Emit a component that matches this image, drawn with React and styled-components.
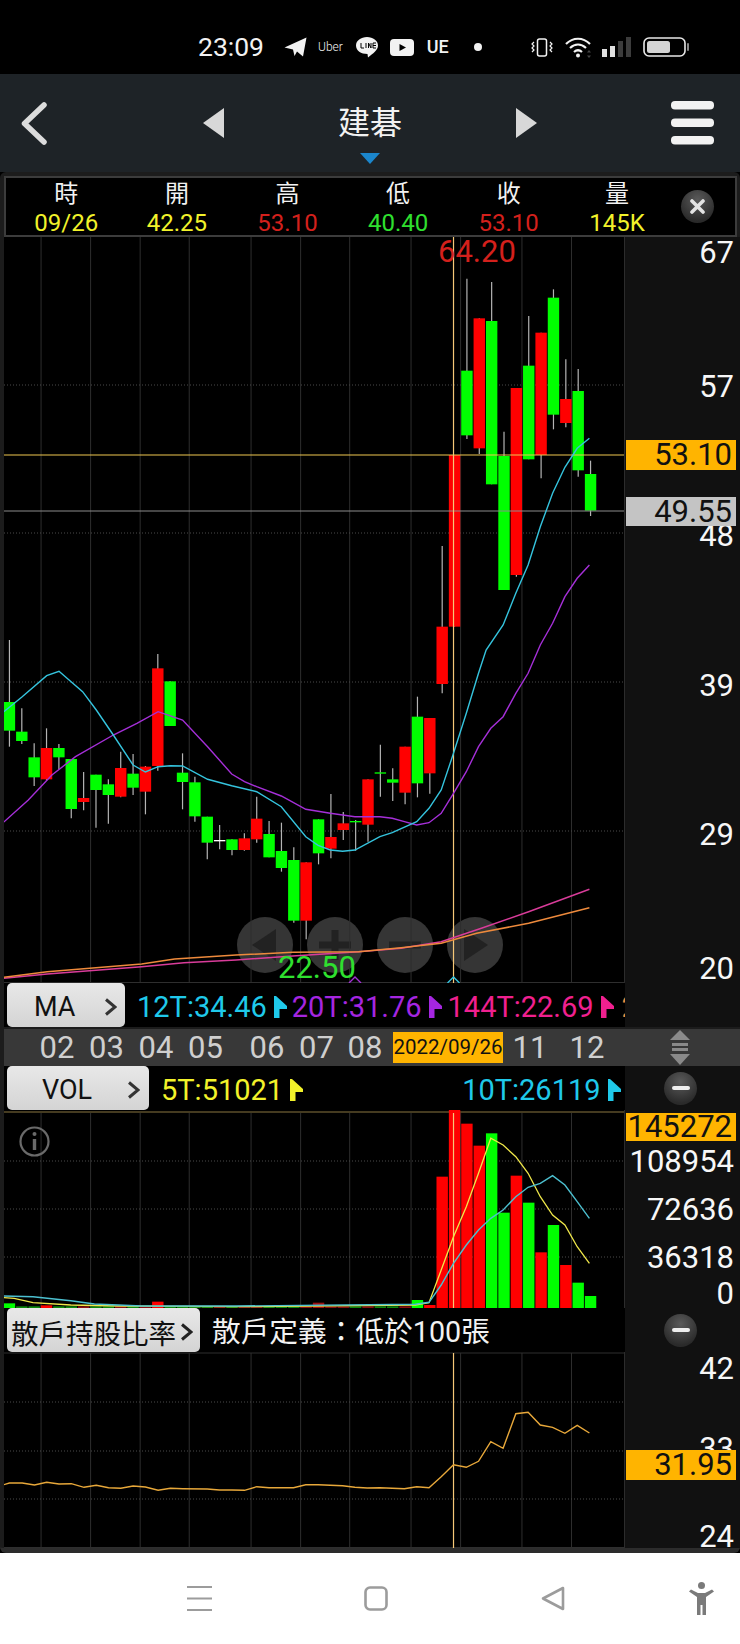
import React from "react";
import styled, { createGlobalStyle } from "styled-components";

const Global = createGlobalStyle`
  html, body { margin: 0; padding: 0; background: #000; }
  #root { width: 740px; height: 1644px; }
  * { box-sizing: border-box; }
`;

const FONT = `Roboto, "Noto Sans CJK TC", sans-serif`;
const AMBER = "#ffb400";
const YELLOW = "#f2f22a";
const RED = "#d4201c";
const GREEN = "#2fe02f";
const CYAN = "#1fc9ea";
const PURPLE = "#a526e0";
const PINK = "#f0208f";
const CAND_G = "#00ff00";
const CAND_R = "#ff0000";
const CURSOR = "#f6c878";

const Page = styled.div`
  width: 740px; height: 1644px; overflow: hidden; display: flex; flex-direction: column;
  background: #000; font-family: ${FONT};
`;

/* status bar */
const StatusBar = styled.div`
  height: 74px; flex: none; display: flex; align-items: center; padding: 20px 0 0 198px; background: #000; color: #f2f2f2;
`;
const Clock = styled.span`font-size: 26.5px; font-weight: 400; line-height: 1; width: 64px; white-space: nowrap;`;
const StatusItem = styled.span`
  display: flex; align-items: center; margin-left: ${p => p.$ml}px; flex: none; line-height: 1;
  font-size: ${p => p.$size || 12}px; font-weight: ${p => p.$weight || 400};
`;

/* header */
const Header = styled.div`
  height: 98px; flex: none; background: #1e2327; display: flex; align-items: center; padding-left: 21px;
`;
const StockNav = styled.div`display: flex; align-items: center; gap: 114px; margin-left: 156px; margin-right: 134px;`;
const TitleBox = styled.div`position: relative; width: 64px; text-align: center;`;
const Title = styled.div`font-size: 32px; line-height: 40px; color: #f2f2f2;`;
const Caret = styled.span`
  position: absolute; left: 22px; top: 50px; width: 0; height: 0;
  border-left: 10px solid transparent; border-right: 10px solid transparent; border-top: 11px solid #1b86cc;
`;

/* panel */
const Panel = styled.div`
  height: 1381px; flex: none; padding-left: 4px; background: #1c1c1c; display: flex; flex-direction: column;
  border-radius: 6px; border-bottom: 5px solid #2c2c2c;
`;
const InfoBar = styled.div`
  margin: 4px 3px 0 0; height: 61px; flex: none; background: #000; border: 2px solid #3c3c3c; display: flex; align-items: center;
  padding-left: 5px; color: #fff;
`;
const InfoGrid = styled.div`display: grid; grid-template-columns: repeat(5, 110.6px) 106px;`;
const InfoCell = styled.div`display: flex; flex-direction: column; align-items: center;`;
const InfoLabel = styled.span`font-size: 24px; line-height: 33px; color: #f2f2f2;`;
const InfoValue = styled.span`font-size: 24px; line-height: 25px; color: ${p => p.$color};`;

const RoundBtn = styled.span`
  width: 33px; height: 33px; border-radius: 50%; flex: none; display: flex; align-items: center; justify-content: center;
  background: radial-gradient(circle at 50% 30%, #5a5a5a, #2a2a2a 75%);
  margin-left: ${p => p.$ml || 0}px;
`;
const Dash = styled.span`width: 18px; height: 4px; border-radius: 2px; background: #eee;`;

const ChartRow = styled.div`display: flex; height: ${p => p.$h}px; flex: none;`;
const Plot = styled.div`
  position: relative; width: 621px; flex: none; background: #000; overflow: hidden;
  border-right: 1px solid #2c2c2c;
`;
const PlotSvg = styled.svg`position: absolute; left: 0; top: 0; width: 621px; height: 100%; z-index: 2;`;
const Axis = styled.div`position: relative; flex: 1; background: #111;`;
const Tick = styled.span`
  position: absolute; right: 6px; top: ${p => p.$y}px; transform: translateY(-50%); font-size: 31px; line-height: 1; color: #f7f7f7;
`;
const Tag = styled.span`
  position: absolute; left: 1px; top: ${p => p.$y}px; width: 110px; height: ${p => p.$h}px; background: ${p => p.$bg};
  font-size: 31px; line-height: ${p => p.$h}px; color: #111; text-align: right; padding-right: 4px;
`;
const ValueMark = styled.span`
  position: absolute; left: ${p => p.$x}px; top: ${p => p.$y}px; font-size: 31px; line-height: 28px; color: ${p => p.$color}; z-index: 3;
`;
const ZoomTray = styled.div`position: absolute; left: 233px; bottom: 10px; display: flex; gap: 14px; z-index: 1;`;
const ZoomBtn = styled.span`
  width: 56px; height: 56px; border-radius: 50%; background: #353535; display: flex; align-items: center; justify-content: center;
`;
const InfoMark = styled.span`
  position: absolute; left: 15px; top: 16px; width: 31px; height: 31px; z-index: 3;
`;

/* indicator rows */
const ToolRow = styled.div`display: flex; height: 44px; flex: none;`;
const ToolMain = styled.div`
  width: 621px; flex: none; background: #000; display: flex; align-items: center; padding-left: 3px; overflow: hidden; white-space: nowrap;
`;
const ToolSide = styled.div`flex: 1; background: #111; display: flex; align-items: center; padding-left: 39px;`;
const SelectBtn = styled.div`
  width: ${p => p.$w}px; height: 44px; flex: none; border-radius: 5px; display: flex; align-items: center; justify-content: space-between;
  padding: 4px ${p => p.$pr}px 0 ${p => p.$pl}px; color: #111; font-size: ${p => p.$size}px;
  background: linear-gradient(#e8e8e8, #d4d4d4);
`;
const Legend = styled.div`
  display: flex; align-items: center; margin-left: ${p => p.$ml}px; gap: 7px; flex: none; font-size: 29px; line-height: 1; padding-top: 4px; color: ${p => p.$color};
`;
const Note = styled.span`margin-left: 12px; padding-top: 4px; font-size: 28.7px; line-height: 1; color: #f2f2f2;`;

const DateRow = styled.div`
  height: 37px; flex: none; margin-top: 2px; background: #383838; display: flex; align-items: center; padding-left: 28px;
`;
const DateTick = styled.span`
  width: ${p => p.$w}px; margin-left: ${p => p.$ml || 0}px; text-align: center; font-size: 31px; line-height: 1; color: #cfcfcf; flex: none;
`;
const DateTag = styled.span`
  width: 110px; height: 31px; margin-left: 4px; flex: none; background: ${AMBER}; color: #111; font-size: 20.5px; line-height: 31px; text-align: center;
`;
const Scrub = styled.span`margin-left: 56px; display: flex;`;

/* nav */
const NavBar = styled.div`
  flex: 1; background: #fff; display: flex; align-items: center; padding-left: 187px;
`;
const NavItem = styled.span`display: flex; margin-left: ${p => p.$ml || 0}px;`;

/* icons */
const Chevron = ({ c = "#333" }) => (
  <svg width="13" height="18" viewBox="0 0 13 18"><path d="M2 1.5 L11 9 L2 16.5" fill="none" stroke={c} strokeWidth="3" /></svg>
);
const Flag = ({ c }) => (
  <svg width="13" height="22" viewBox="0 0 13 22"><path d="M0 0 L2 0 L13 10 L13 13 L5.5 13 L5.5 22 L0 22 Z" fill={c} /></svg>
);

const X = x => x / 2.119;
const pts = (arr, base) => arr.map(([x, y]) => `${X(x).toFixed(1)},${(base + y / 3).toFixed(1)}`).join(" ");

const V_GRID = [87, 192, 297, 401, 532, 637, 741, 871, 976, 1106, 1211].map(X);
const CURSOR_X = X(961);

const Grid = ({ y0, y1, hs }) => (
  <g>
    {V_GRID.map(x => <line key={x} x1={x} x2={x} y1={y0} y2={y1} stroke="#2e2e2e" strokeWidth="1" />)}
    {hs.map(y => <line key={y} x1="4" x2="625" y1={y} y2={y} stroke="#4a4a4a" strokeWidth="1" strokeDasharray="1 2" />)}
  </g>
);

/* [type, bodyTop, bodyBottom, wickTop, wickBottom], in crop units: y = 640 + v / 3 */
const s = -1230;
const CANDLES = [
  ["g",186,272,0,320],["g",275,303,205,312],["g",352,412,310,438],["r",324,418,265,422],["g",324,352,312,388],
  ["g",357,507,357,535],["r",474,486,396,511],["g",404,450,404,563],["g",433,465,418,551],["r",384,470,335,472],
  ["g",401,443,342,465],["r",380,455,378,523],["r",85,378,42,392],["g",124,258,124,258],["g",398,426,340,508],
  ["g",427,529,410,545],["g",530,608,530,658],["w",600,604,555,628],["g",598,630,598,646],["r",595,630,580,632],
  ["r",536,598,470,608],["g",582,652,543,652],["g",633,684,548,695],["g",660,842,622,848],["r",667,842,667,898],
  ["g",538,640,538,673],["r",591,626,462,655],["r",550,570,516,600],["g",543,547,540,632],["r",418,554,418,605],
  ["g",397,401,314,470],["g",418,428,385,483],["r",320,458,320,493],["g",230,430,170,472],["r",234,400,234,461],
  ["r",1190+s,132,948+s,160],["r",675+s,1190+s,675+s,1190+s],["g",422+s,616+s,146+s,627+s],["r",265+s,655+s,265+s,672+s],
  ["g",273+s,763+s,156+s,763+s],["g",678+s,1080+s,605+s,1080+s],["r",474+s,1035+s,474+s,1040+s],["g",407+s,688+s,258+s,688+s],
  ["r",308+s,675+s,308+s,745+s],["g",203+s,554+s,178+s,598+s],["r",507+s,579+s,388+s,592+s],["g",483+s,721+s,417+s,740+s],
  ["g",732+s,842+s,692+s,858+s],
];
const cx = i => X(20 + 26.2 * i);
const fillOf = t => (t === "g" ? CAND_G : t === "r" ? CAND_R : "#fff");

const MA12 = [[8,215],[47,170],[99,107],[125,94],[175,155],[204,210],[240,285],[282,375],[308,396],[335,380],[361,377],[387,378],[440,418],[491,437],[544,455],[596,500],[648,590],[674,616],[700,630],[726,634],[752,630],[805,590],[831,578],[883,545],[909,505],[935,450],[961,340],[988,220],[1014,100],[1030,30],[1066,-45],[1093,-140],[1119,-225],[1145,-340],[1171,-440],[1197,-518],[1223,-575],[1249,-605]];
const MA20 = [[8,546],[60,480],[110,405],[160,350],[240,285],[290,250],[335,215],[387,240],[440,320],[491,402],[518,425],[544,440],[596,468],[648,508],[700,520],[752,530],[805,530],[831,535],[857,545],[883,555],[909,548],[935,520],[961,460],[988,395],[1014,320],[1040,265],[1066,230],[1093,160],[1119,100],[1145,15],[1171,-50],[1197,-130],[1223,-185],[1249,-225]];
const MA144 = [[8,1015],[100,1002],[300,980],[390,968],[500,960],[620,948],[760,935],[850,925],[935,905],[1020,865],[1120,815],[1249,748]];
const MA240 = [[8,1012],[100,995],[300,972],[370,957],[500,945],[620,937],[760,935],[850,923],[935,910],[1010,880],[1120,850],[1249,803]];

const VOL_TOP = { 0: 1000, 3: 1006, 12: 995, 25: 998, 33: 990, 34: 1005, 35: 620, 36: 420, 37: 461, 38: 527, 39: 490, 40: 728, 41: 617, 42: 698, 43: 847, 44: 765, 45: 885, 46: 938, 47: 978 };
const VOL5 = [[8,983],[30,985],[70,998],[150,1005],[250,1008],[500,1010],[880,1005],[909,998],[935,900],[961,800],[988,710],[1014,610],[1040,505],[1066,525],[1093,560],[1119,610],[1145,680],[1171,735],[1197,765],[1223,830],[1249,880]];
const VOL10 = [[8,978],[70,980],[150,992],[200,1002],[300,1008],[500,1008],[880,1003],[909,997],[935,945],[961,880],[988,825],[1014,780],[1040,745],[1066,720],[1093,680],[1119,652],[1145,640],[1171,617],[1197,645],[1223,695],[1249,745]];
const RATIO = [[8,554],[20,549],[47,549],[73,555],[99,547],[125,552],[151,551],[178,562],[204,556],[230,563],[256,565],[282,558],[308,561],[335,571],[361,565],[387,566],[439,567],[465,570],[491,570],[518,571],[544,560],[570,563],[622,563],[648,554],[674,554],[726,557],[752,562],[778,564],[805,563],[831,565],[857,566],[883,560],[909,563],[935,530],[961,494],[988,502],[1014,484],[1040,425],[1066,445],[1093,341],[1119,337],[1145,375],[1171,382],[1197,400],[1223,376],[1249,399]];

const PriceChart = () => (
  <PlotSvg viewBox="4 237 621 746" preserveAspectRatio="none">
    <Grid y0={237} y1={983} hs={[385, 533, 682, 831]} />
    <line x1="4" x2="625" y1="982.5" y2="982.5" stroke="#2e2e2e" strokeWidth="1" />
    {CANDLES.map(([t, a, b, wa, wb], i) => (
      <line key={"w" + i} x1={cx(i)} x2={cx(i)} y1={640 + wa / 3} y2={640 + wb / 3} stroke="#b4b4b4" strokeWidth="1.2" />
    ))}
    {CANDLES.map(([t, a, b], i) => (
      <rect key={"b" + i} x={cx(i) - 5.7} width="11.4" y={640 + a / 3} height={(b - a) / 3} fill={fillOf(t)} />
    ))}
    <line x1="4" x2="625" y1="455" y2="455" stroke="#f0c850" strokeWidth="1.2" />
    <line x1="4" x2="625" y1="511" y2="511" stroke="#8c8c8c" strokeWidth="1.2" />
    <line x1={CURSOR_X} x2={CURSOR_X} y1="237" y2="983" stroke={CURSOR} strokeWidth="1.2" />
    <polyline points={pts(MA20, 640)} fill="none" stroke="#a52fd8" strokeWidth="1.4" />
    <polyline points={pts(MA12, 640)} fill="none" stroke="#35c4de" strokeWidth="1.4" />
    <polyline points={pts(MA144, 640)} fill="none" stroke="#d93c9a" strokeWidth="1.5" />
    <polyline points={pts(MA240, 640)} fill="none" stroke="#ee8a3c" strokeWidth="1.5" />
    <path d="M349 983 L355 977 L361 983" fill="none" stroke="#a52fd8" strokeWidth="1.4" />
    <path d={`M${CURSOR_X - 6} 983 L${CURSOR_X} 977 L${CURSOR_X + 6} 983`} fill="none" stroke="#35c4de" strokeWidth="1.4" />
  </PlotSvg>
);

const VOL_RED = new Set([35, 36, 37, 38, 41, 43, 45]);

const VolChart = () => (
  <PlotSvg viewBox="4 1110 621 198" preserveAspectRatio="none">
    <Grid y0={1113} y1={1308} hs={[1161, 1209, 1257]} />
    <line x1="4" x2="625" y1="1112" y2="1112" stroke="#8a7640" strokeWidth="1.2" />
    {CANDLES.map(([t], i) => {
      const top = VOL_TOP[i] ?? 1009;
      const big = i > 34;
      const color = big
        ? (VOL_RED.has(i) ? CAND_R : CAND_G)
        : i === 33 ? CAND_G
        : i === 25 ? "#a01010"
        : VOL_TOP[i] == null ? (t === "g" ? "#0c8a0c" : "#8a1010") : fillOf(t === "w" ? "g" : t);
      return <rect key={i} x={cx(i) - 5.7} width="11.4" y={970 + top / 3} height={(1014 - top) / 3} fill={color} />;
    })}
    <line x1={CURSOR_X} x2={CURSOR_X} y1="1113" y2="1308" stroke={CURSOR} strokeWidth="1.2" />
    <polyline points={pts(VOL5, 970)} fill="none" stroke="#f0e84a" strokeWidth="1.3" />
    <polyline points={pts(VOL10, 970)} fill="none" stroke="#4cc0d0" strokeWidth="1.4" />
  </PlotSvg>
);

const RatioChart = () => (
  <PlotSvg viewBox="4 1352 621 196" preserveAspectRatio="none">
    <Grid y0={1353} y1={1548} hs={[1402, 1451, 1499]} />
    <line x1="4" x2="625" y1="1353" y2="1353" stroke="#2e2e2e" strokeWidth="1" />
    <line x1="4" x2="625" y1="1547.5" y2="1547.5" stroke="#2e2e2e" strokeWidth="1" />
    <line x1={CURSOR_X} x2={CURSOR_X} y1="1353" y2="1548" stroke={CURSOR} strokeWidth="1.2" />
    <polyline points={pts(RATIO, 1300)} fill="none" stroke="#e8a83a" strokeWidth="1.4" />
  </PlotSvg>
);

const INFO = [
  ["時", "09/26", YELLOW], ["開", "42.25", YELLOW], ["高", "53.10", RED],
  ["低", "40.40", GREEN], ["收", "53.10", RED], ["量", "145K", YELLOW],
];

export default function App() {
  return (
    <Page>
      <Global />
      <StatusBar>
        <Clock>23:09</Clock>
        <StatusItem $ml={22}>
          <svg width="23" height="20" viewBox="0 0 23 20"><path d="M0.5 10.5 L22.5 0.5 L19 19.5 L13 14.5 L10.5 19 L9 12.5 Z" fill="#f2f2f2" /></svg>
        </StatusItem>
        <StatusItem $ml={11} $size={12} $weight={300}>Uber</StatusItem>
        <StatusItem $ml={13}>
          <svg width="22" height="21" viewBox="0 0 22 21">
            <path d="M11 0 C17 0 22 3.6 22 8.5 C22 13 17 16.5 12 20.5 L11.5 17 C5 17 0 13.5 0 8.5 C0 3.6 5 0 11 0 Z" fill="#f2f2f2" />
            <path d="M5 6 V11 H8 M10 6 V11 M12.5 11 V6 L15 11 V6 M20 6 H17 V11 H20 M17 8.5 H20" fill="none" stroke="#000" strokeWidth="1" />
          </svg>
        </StatusItem>
        <StatusItem $ml={12}>
          <svg width="24" height="17" viewBox="0 0 24 17"><rect width="24" height="17" rx="4" fill="#f2f2f2" /><path d="M9.5 5 L16 8.5 L9.5 12 Z" fill="#000" /></svg>
        </StatusItem>
        <StatusItem $ml={13} $size={18} $weight={500}>UE</StatusItem>
        <StatusItem $ml={25}>
          <svg width="8" height="8" viewBox="0 0 8 8"><circle cx="4" cy="4" r="4" fill="#f2f2f2" /></svg>
        </StatusItem>
        <StatusItem $ml={49}>
          <svg width="22" height="19" viewBox="0 0 22 19" fill="none" stroke="#f2f2f2" strokeWidth="1.5">
            <rect x="6.5" y="1" width="9" height="17" rx="2" />
            <path d="M3 4 L1 6 L3 8 L1 10 L3 12 L1 14 M19 4 L21 6 L19 8 L21 10 L19 12 L21 14" strokeWidth="1.2" />
          </svg>
        </StatusItem>
        <StatusItem $ml={12}>
          <svg width="29" height="21" viewBox="0 0 29 21" fill="none" stroke="#f2f2f2" strokeWidth="2.2">
            <path d="M1 7 C8 0 18 0 25 7 M5 11 C10 6.5 16 6.5 21 11 M9 15 C11.5 12.8 14.5 12.8 17 15" />
            <circle cx="13" cy="18.5" r="2" fill="#f2f2f2" stroke="none" />
            <path d="M24 13 L26 15.5 H22 Z M24 21 L26 18.5 H22 Z" fill="#444" stroke="none" />
          </svg>
        </StatusItem>
        <StatusItem $ml={8}>
          <svg width="29" height="20" viewBox="0 0 29 20">
            <rect x="0" y="12" width="5" height="8" fill="#e0e0e0" />
            <rect x="8" y="9" width="5" height="11" fill="#e0e0e0" />
            <rect x="16" y="4" width="5" height="16" fill="#3c3c3c" />
            <rect x="24" y="0" width="5" height="20" fill="#3c3c3c" />
          </svg>
        </StatusItem>
        <StatusItem $ml={12}>
          <svg width="46" height="20" viewBox="0 0 46 20">
            <rect x="1" y="1" width="41" height="18" rx="5" fill="none" stroke="#e8e8e8" strokeWidth="1.6" />
            <rect x="4" y="4" width="23" height="12" rx="2.5" fill="#d4d4d4" />
            <rect x="44" y="6" width="2" height="8" rx="1" fill="#888" />
          </svg>
        </StatusItem>
      </StatusBar>

      <Header>
        <svg width="26" height="43" viewBox="0 0 26 43"><path d="M23 3 L3.5 21.5 L23 40" fill="none" stroke="#dcdcdc" strokeWidth="5.5" strokeLinecap="round" strokeLinejoin="round" /></svg>
        <StockNav>
          <svg width="21" height="30" viewBox="0 0 21 30"><path d="M21 0 V30 L0 15 Z" fill="#d8d8d8" /></svg>
          <TitleBox>
            <Title>建碁</Title>
            <Caret />
          </TitleBox>
          <svg width="21" height="30" viewBox="0 0 21 30"><path d="M0 0 V30 L21 15 Z" fill="#d8d8d8" /></svg>
        </StockNav>
        <svg width="43" height="44" viewBox="0 0 43 44">
          <rect y="0" width="43" height="8.5" rx="4" fill="#f2f2f2" />
          <rect y="17.5" width="43" height="8.5" rx="4" fill="#f2f2f2" />
          <rect y="35" width="43" height="8.5" rx="4" fill="#f2f2f2" />
        </svg>
      </Header>

      <Panel>
        <InfoBar>
          <InfoGrid>
            {INFO.map(([l, v, c]) => (
              <InfoCell key={l}>
                <InfoLabel>{l}</InfoLabel>
                <InfoValue $color={c}>{v}</InfoValue>
              </InfoCell>
            ))}
          </InfoGrid>
          <RoundBtn $ml={11}>
            <svg width="15" height="15" viewBox="0 0 15 15"><path d="M2 2 L13 13 M13 2 L2 13" stroke="#e4e4e4" strokeWidth="3.6" strokeLinecap="round" /></svg>
          </RoundBtn>
        </InfoBar>

        <ChartRow $h={746}>
          <Plot>
            <ZoomTray>
              <ZoomBtn><svg width="30" height="36" viewBox="0 0 30 36"><path d="M26 2 V34 L2 18 Z" fill="#222" /></svg></ZoomBtn>
              <ZoomBtn><svg width="36" height="36" viewBox="0 0 36 36"><path d="M18 3 V33 M2 18 H34" stroke="#222" strokeWidth="7" /></svg></ZoomBtn>
              <ZoomBtn><svg width="36" height="36" viewBox="0 0 36 36"><path d="M2 18 H34" stroke="#222" strokeWidth="7" /></svg></ZoomBtn>
              <ZoomBtn><svg width="30" height="36" viewBox="0 0 30 36"><path d="M4 2 V34 L28 18 Z" fill="#222" /></svg></ZoomBtn>
            </ZoomTray>
            <PriceChart />
            <ValueMark $x={434} $y={1} $color={RED}>64.20</ValueMark>
            <ValueMark $x={274} $y={717} $color={GREEN}>22.50</ValueMark>
          </Plot>
          <Axis>
            <Tick $y={15}>67</Tick>
            <Tick $y={149}>57</Tick>
            <Tick $y={298}>48</Tick>
            <Tick $y={448}>39</Tick>
            <Tick $y={597}>29</Tick>
            <Tick $y={731}>20</Tick>
            <Tag $y={203} $h={30} $bg={AMBER}>53.10</Tag>
            <Tag $y={260} $h={29} $bg="#c4c4c4">49.55</Tag>
          </Axis>
        </ChartRow>

        <ToolRow>
          <ToolMain>
            <SelectBtn $w={118} $pl={27} $pr={8} $size={27}>MA<Chevron /></SelectBtn>
            <Legend $ml={12} $color={CYAN}>12T:34.46<Flag c={CYAN} /></Legend>
            <Legend $ml={5} $color={PURPLE}>20T:31.76<Flag c={PURPLE} /></Legend>
            <Legend $ml={6} $color={PINK}>144T:22.69<Flag c={PINK} /></Legend>
            <Legend $ml={8} $color="#ee8a3c">240T</Legend>
          </ToolMain>
          <ToolSide />
        </ToolRow>

        <DateRow>
          <DateTick $w={50}>02</DateTick>
          <DateTick $w={49}>03</DateTick>
          <DateTick $w={50}>04</DateTick>
          <DateTick $w={49}>05</DateTick>
          <DateTick $w={50} $ml={12}>06</DateTick>
          <DateTick $w={49}>07</DateTick>
          <DateTick $w={48}>08</DateTick>
          <DateTag>2022/09/26</DateTag>
          <DateTick $w={50} $ml={2}>11</DateTick>
          <DateTick $w={50} $ml={7}>12</DateTick>
          <Scrub>
            <svg width="24" height="35" viewBox="0 0 24 35" fill="#8a8a8a">
              <path d="M12 0 L22 10 H2 Z" />
              <rect x="4" y="13" width="16" height="3" />
              <rect x="4" y="18" width="16" height="3" />
              <path d="M12 35 L22 24 H2 Z" />
            </svg>
          </Scrub>
        </DateRow>

        <ToolRow>
          <ToolMain>
            <SelectBtn $w={142} $pl={35} $pr={9} $size={27}>VOL<Chevron /></SelectBtn>
            <Legend $ml={12} $color={YELLOW}>5T:51021<Flag c={YELLOW} /></Legend>
            <Legend $ml={159} $color={CYAN}>10T:26119<Flag c={CYAN} /></Legend>
          </ToolMain>
          <ToolSide><RoundBtn><Dash /></RoundBtn></ToolSide>
        </ToolRow>

        <ChartRow $h={198}>
          <Plot>
            <VolChart />
            <InfoMark>
              <svg width="31" height="31" viewBox="0 0 31 31" fill="none" stroke="#6a6a6a" strokeWidth="2.2">
                <circle cx="15.5" cy="15.5" r="14" />
                <path d="M15.5 13 V24" strokeWidth="3.4" />
                <circle cx="15.5" cy="8" r="2" fill="#6a6a6a" stroke="none" />
              </svg>
            </InfoMark>
          </Plot>
          <Axis>
            <Tag $y={3} $h={28} $bg={AMBER}>145272</Tag>
            <Tick $y={51}>108954</Tick>
            <Tick $y={99}>72636</Tick>
            <Tick $y={147}>36318</Tick>
            <Tick $y={183}>0</Tick>
          </Axis>
        </ChartRow>

        <ToolRow>
          <ToolMain>
            <SelectBtn $w={193} $pl={4} $pr={7} $size={27.5}>散戶持股比率<Chevron c="#222" /></SelectBtn>
            <Note>散戶定義：低於100張</Note>
          </ToolMain>
          <ToolSide><RoundBtn><Dash /></RoundBtn></ToolSide>
        </ToolRow>

        <ChartRow $h={196}>
          <Plot>
            <RatioChart />
          </Plot>
          <Axis>
            <Tick $y={16}>42</Tick>
            <Tick $y={96}>33</Tick>
            <Tick $y={184}>24</Tick>
            <Tag $y={98} $h={30} $bg={AMBER}>31.95</Tag>
          </Axis>
        </ChartRow>
      </Panel>

      <NavBar>
        <svg width="25" height="25" viewBox="0 0 25 25" fill="#9c9c9c">
          <rect y="0" width="25" height="2" /><rect y="11.5" width="25" height="2" /><rect y="23" width="25" height="2" />
        </svg>
        <NavItem $ml={152}>
          <svg width="24" height="25" viewBox="0 0 24 25"><rect x="1.5" y="1.5" width="21" height="22" rx="4.5" fill="none" stroke="#9c9c9c" strokeWidth="2.6" /></svg>
        </NavItem>
        <NavItem $ml={153}>
          <svg width="24" height="25" viewBox="0 0 24 25"><path d="M22 2 L2 12.5 L22 23 Z" fill="none" stroke="#9c9c9c" strokeWidth="2.6" strokeLinejoin="round" /></svg>
        </NavItem>
        <NavItem $ml={124}>
          <svg width="25" height="33" viewBox="0 0 25 33" fill="#7a7a7a">
            <circle cx="12.5" cy="3.5" r="3.5" />
            <path d="M0 9.5 L2 7.5 L9 11 H16 L23 7.5 L25 9.5 L17 15 V33 H13.5 V23 H11.5 V33 H8 V15 Z" />
          </svg>
        </NavItem>
      </NavBar>
    </Page>
  );
}
